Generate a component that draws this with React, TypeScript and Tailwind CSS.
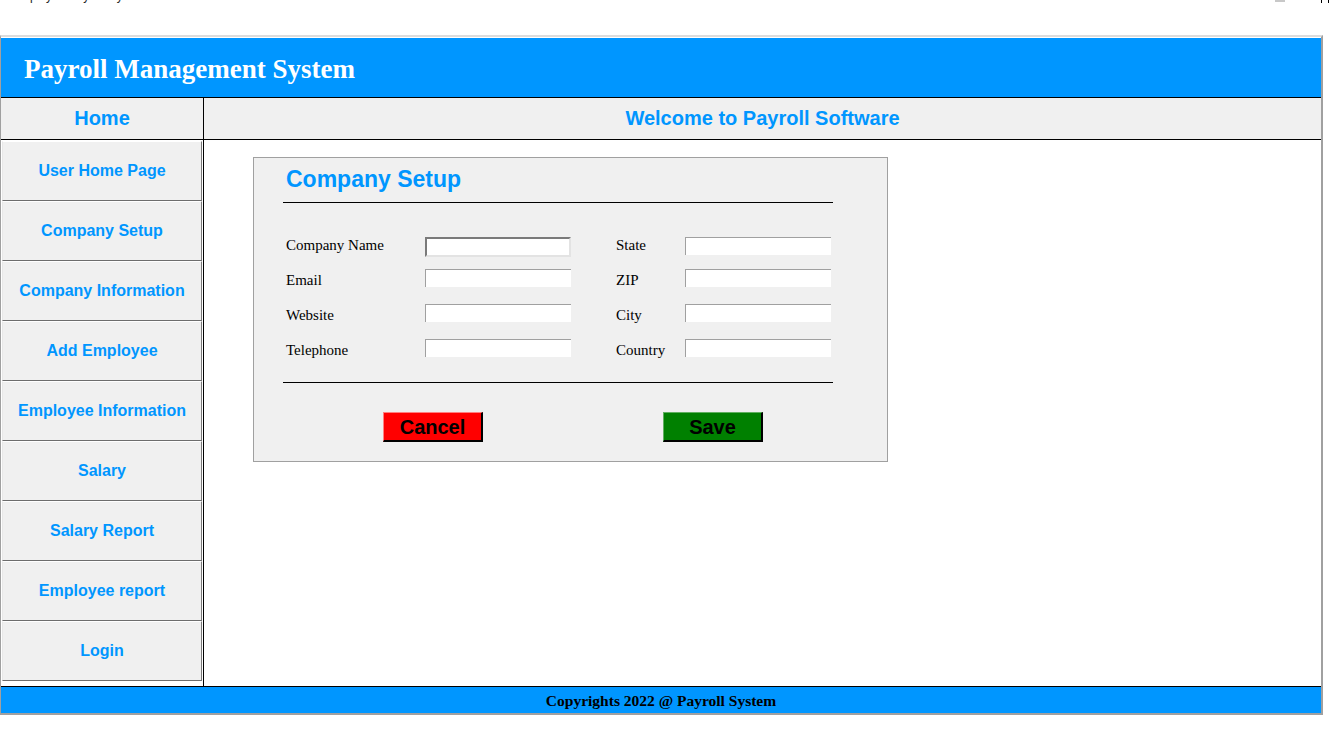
import React from "react";

const menu = [
  "User Home Page",
  "Company Setup",
  "Company Information",
  "Add Employee",
  "Employee Information",
  "Salary",
  "Salary Report",
  "Employee report",
  "Login",
];

const leftFields = ["Company Name", "Email", "Website", "Telephone"];
const rightFields = ["State", "ZIP", "City", "Country"];

function Field({ focused }: { focused?: boolean }) {
  if (focused) {
    return (
      <div className="w-[146px] h-[20px] bg-white border-2 border-t-[#7a7a7a] border-l-[#7a7a7a] border-r-[#e3e3e3] border-b-[#e3e3e3]" />
    );
  }
  return (
    <div className="w-[146px] h-[18px] bg-white border-t border-l border-[#a0a0a0]" />
  );
}

export default function App() {
  const serif = { fontFamily: '"Liberation Serif", "Times New Roman", serif' };
  const sans = { fontFamily: '"Liberation Sans", Arial, sans-serif' };
  return (
    <div className="w-[1336px] h-[735px] bg-white overflow-hidden" style={sans}>
      {/* window title bar (cut off) */}
      <div className="h-[35px] flex items-start overflow-hidden">
        <div className="pl-[12px] -mt-[11px] text-[12px] text-[#222] leading-[14px]">
          Employee Payroll System Information
        </div>
        <div className="flex-1" />
        <div className="w-[10px] h-[2px] bg-[#c8c8c8]" />
        <div className="w-[36px]" />
        <div className="w-[1px] h-[3px] bg-black" />
        <div className="w-[6px]" />
        <div className="w-[1px] h-[3px] bg-black" />
        <div className="w-[7px]" />
      </div>

      {/* frame */}
      <div className="w-[1323px] bg-white pt-[1px] border-t-2 border-l border-r-2 border-b-2 border-t-[#dcdcdc] border-l-[#a0a0a0] border-r-[#a0a0a0] border-b-[#a0a0a0] flex flex-col">
        {/* header */}
        <div className="h-[59px] bg-[#0096ff] flex items-center pl-[23px] pt-[4px]">
          <div className="text-white font-bold text-[27px] leading-[31px]" style={serif}>
            Payroll Management System
          </div>
        </div>

        {/* nav row */}
        <div className="h-[43px] border-t border-b border-black bg-[#f0f0f0] flex">
          <div className="w-[203px] border-r border-black flex items-center justify-center pb-[2px] text-[#0096ff] font-bold text-[20px]">
            Home
          </div>
          <div className="flex-1 flex items-center justify-center pb-[2px] text-[#0096ff] font-bold text-[20px]">
            Welcome to Payroll Software
          </div>
        </div>

        {/* content */}
        <div className="h-[546px] flex">
          <div className="w-[203px] border-r border-black bg-white pt-[1px]">
            {menu.map((m) => (
              <div
                key={m}
                className="ml-[1px] w-[200px] h-[60px] bg-[#f0f0f0] border-t border-l border-t-white border-l-[#e8e8e8] border-r border-r-[#7a7a7a] border-b border-b-[#6d6d6d] flex items-center justify-center text-[#0096ff] font-bold text-[16px]"
              >
                {m}
              </div>
            ))}
          </div>

          <div className="flex-1 bg-white">
            <div className="ml-[49px] mt-[17px] w-[635px] h-[305px] bg-[#f0f0f0] border border-[#a0a0a0] pl-[29px]">
              <div className="ml-[3px] mt-[8px] text-[23px] leading-[26px] font-bold text-[#0096ff]">
                Company Setup
              </div>
              <div className="mt-[10px] w-[550px] h-px bg-black" />

              <div className="mt-[34px] pl-[3px] flex flex-col text-[15px] text-black" style={serif}>
                {leftFields.map((lf, i) => (
                  <div key={lf} className={`flex items-start ${i === 0 ? "h-[32px]" : "h-[35px]"}`}>
                    <div className={`w-[139px] leading-[17px] ${i === 0 ? "mt-[0px]" : "mt-[3px]"}`}>{lf}</div>
                    <Field focused={i === 0} />
                    <div className={`ml-[45px] w-[69px] leading-[17px] ${i === 0 ? "mt-[0px]" : "mt-[3px]"}`}>
                      {rightFields[i]}
                    </div>
                    <Field />
                  </div>
                ))}
              </div>

              <div className="mt-[8px] w-[550px] h-px bg-black" />

              <div className="mt-[29px] flex">
                <div className="ml-[100px] w-[100px] h-[30px] bg-[#ff0000] border-t border-l border-t-[#ff8080] border-l-[#ff8080] border-r-2 border-b-2 border-black flex items-center justify-center text-black font-bold text-[20px] leading-none">
                  Cancel
                </div>
                <div className="ml-[180px] w-[100px] h-[30px] bg-[#008000] border-t border-l border-t-[#60b060] border-l-[#60b060] border-r-2 border-b-2 border-black flex items-center justify-center text-black font-bold text-[20px] leading-none">
                  Save
                </div>
              </div>
            </div>
          </div>
        </div>

        {/* footer */}
        <div className="h-[27px] border-t border-black bg-[#0096ff] flex items-center justify-center">
          <div className="font-bold text-[15.5px] text-black leading-[20px] pt-[1px]" style={serif}>
            Copyrights 2022 @ Payroll System
          </div>
        </div>
      </div>
    </div>
  );
}
